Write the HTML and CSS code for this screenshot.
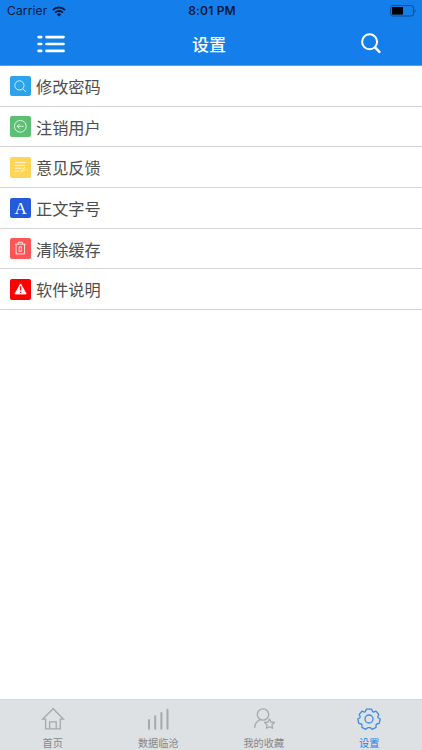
FILE: index.html
```html
<!DOCTYPE html>
<html lang="zh-CN">
<head>
<meta charset="utf-8">
<title>设置</title>
<link rel="stylesheet" href="styles.css">
</head>
<body>
<div class="app">
  <header class="header">
    <div class="status">
      <div class="carrier"><span>Carrier</span>
        <svg width="14" height="11" viewBox="0 0 14 11" fill="none" stroke="#061a3c" stroke-width="2"><path d="M.8 4.1a8.8 8.8 0 0 1 12.4 0M3.1 6.6a5.5 5.5 0 0 1 7.8 0"/><path d="M7 10.6 4.8 8.4a3.1 3.1 0 0 1 4.4 0Z" fill="#061a3c" stroke="none"/></svg>
      </div>
      <span class="time">8:01 PM</span>
      <svg class="battery" width="27" height="12" viewBox="0 0 27 12"><rect x=".6" y=".6" width="23" height="10.4" rx="2.2" fill="none" stroke="#0c4d98"/><rect x="2" y="2" width="11" height="7.6" fill="#000"/><path d="M24.7 3.8q1.8 2 0 4Z" fill="#0c4d98"/></svg>
    </div>
    <nav class="bar">
      <svg class="menu" width="28" height="18" viewBox="0 0 28 18" fill="none" stroke="#fff" stroke-width="2.7" stroke-linecap="round"><path d="M1.6 2.1h2.6M9.5 2.1h17M1.6 9h2.6M9.5 9h17M1.6 15.9h2.6M9.5 15.9h17"/></svg>
      <h1>设置</h1>
      <svg class="search" width="20" height="21" viewBox="0 0 20 21" fill="none" stroke="#fff" stroke-width="2" stroke-linecap="round"><circle cx="8.6" cy="8.8" r="7.5"/><path d="m14 14.3 4.4 4.6" stroke-width="2.4"/></svg>
    </nav>
  </header>
  <main class="list">
    <div class="row"><svg class="icon blue" viewBox="0 0 21 21"><circle cx="9.6" cy="9.6" r="4.7"/><path d="m13 13 3.3 3.2"/></svg><span>修改密码</span></div>
    <div class="row"><svg class="icon green" viewBox="0 0 21 21"><circle cx="10.5" cy="10.5" r="6"/><path d="M14 10.5H7.3M9.8 8l-2.5 2.5L9.8 13"/></svg><span>注销用户</span></div>
    <div class="row"><svg class="icon yellow" viewBox="0 0 21 21"><path d="M5 5.5h11M5 8.5h10M5 11.5h7M5 14.5h4.5M11 15.8l.5-1.8 4-4M12.5 15.3l3.5-3.5"/></svg><span>意见反馈</span></div>
    <div class="row"><span class="icon royal letter">A</span><span>正文字号</span></div>
    <div class="row"><svg class="icon coral" viewBox="0 0 21 21"><path d="M5 6.3h11M8.2 6.2V4.4h4.6v1.8M6.2 6.5v9.7h8.6V6.5M9.4 9v4.7h2.2V9Z"/></svg><span>清除缓存</span></div>
    <div class="row"><svg class="icon red" viewBox="0 0 21 21"><path d="M10.8 5 16.5 15.2H5Z" fill="#fff" stroke="#fff" stroke-linejoin="round"/><path d="M10.8 7.5v4.2M10.8 13v1.3" stroke="#f00" stroke-width="1.3"/></svg><span>软件说明</span></div>
  </main>
  <footer class="tabs">
    <div class="tab"><svg viewBox="0 0 24 24"><path d="M1.5 12.2 12.2 1.7l10.3 10.5h-3.2v9.6H4.6v-9.6ZM8.6 21.8v-7h6.6v7"/></svg><span>首页</span></div>
    <div class="tab"><svg viewBox="0 0 24 24" stroke-width="2.1" stroke-linecap="round"><path d="M3 13v8.8M9.2 9.2v12.6M15.4 6v15.8M21.5 2.8v19"/></svg><span>数据临沧</span></div>
    <div class="tab"><svg viewBox="0 0 24 24"><circle cx="11" cy="7.5" r="5.7"/><path d="M8.2 12.6c-3.5 1.6-5.4 4.1-5.6 8.1M17.5 12l1.5 3 3.4.5-2.4 2.4.5 3.4-3-1.6-3 1.6.5-3.4-2.4-2.4 3.4-.5Z" stroke-linejoin="round"/></svg><span>我的收藏</span></div>
    <div class="tab active"><svg viewBox="0 0 24 24"><path d="M9.3 2.2h5.4l.9 2.4 1.1.5 2.3-1 2.8 3.4-1 2.2.3 1.1 2.1 1.2-1 4.4-2.4.6-.8 1 .1 2.4-3.9 1.9-1.9-1.6h-2.6l-1.9 1.6-3.9-1.9.1-2.4-.8-1-2.4-.6-1-4.4 2.1-1.2.3-1.1-1-2.2L5 4.1l2.3 1 1.1-.5Z" stroke-linejoin="round"/><circle cx="12" cy="12" r="4"/></svg><span>设置</span></div>
  </footer>
</div>
</body>
</html>
```
FILE: styles.css
```css
* { box-sizing: border-box; }
body { margin: 0; background: #fff; font-family: "Noto Sans CJK SC", sans-serif; }
.app { width: 422px; height: 750px; display: flex; flex-direction: column; }
svg { display: block; flex: none; }
.header { height: 66px; flex: none; background: #147feb; border-bottom: 1px solid #5b9fe4; }
.status { height: 22px; display: grid; grid-template-columns: 1fr auto 1fr; align-items: center; padding: 0 5px 0 7px; font: 12px/22px Inter, sans-serif; color: #061a3c; }
.carrier { display: flex; align-items: center; gap: 5px; letter-spacing: .15px; }
.time { font-weight: 600; letter-spacing: .2px; }
.battery { justify-self: end; }
.bar { height: 43px; display: grid; grid-template-columns: 1fr auto 1fr; align-items: center; padding: 0 41px 0 37px; }
h1 { margin: 0; font-size: 17px; line-height: 24px; font-weight: 500; color: #fff; }
.search { justify-self: end; }
.list { flex: 1; }
.row { height: 40.7px; display: flex; align-items: center; gap: 5px; padding-left: 10.4px; border-bottom: 1px solid #d6d6d6; color: #4d4d4d; font-size: 16.2px; line-height: 24px; }
.icon { width: 20.6px; height: 20.6px; border-radius: 2px; fill: none; stroke: rgba(255,255,255,.8); stroke-width: 1; }
.blue { background: #2ba3ed; }
.green { background: #5bc073; }
.yellow { background: #ffd556; }
.royal { background: #245bdc; }
.coral { background: #ff5655; }
.red { background: #f00; }
.letter { color: #fff; font: 17px/21px "Liberation Serif", serif; text-align: center; }
.tabs { height: 51px; flex: none; display: grid; grid-template-columns: repeat(4, 1fr); background: #dde1e3; border-top: 1px solid #d3d6d8; }
.tab { display: flex; flex-direction: column; align-items: center; padding-top: 7px; color: #858788; font-size: 10.2px; line-height: 15px; gap: 4px; }
.tab svg { width: 24px; height: 24px; fill: none; stroke: #a6a9ab; stroke-width: 1.3; }
.tab svg[stroke-width] { stroke-width: 2; }
.active { color: #1b80eb; }
.active svg { stroke: #3d8de8; }
```
